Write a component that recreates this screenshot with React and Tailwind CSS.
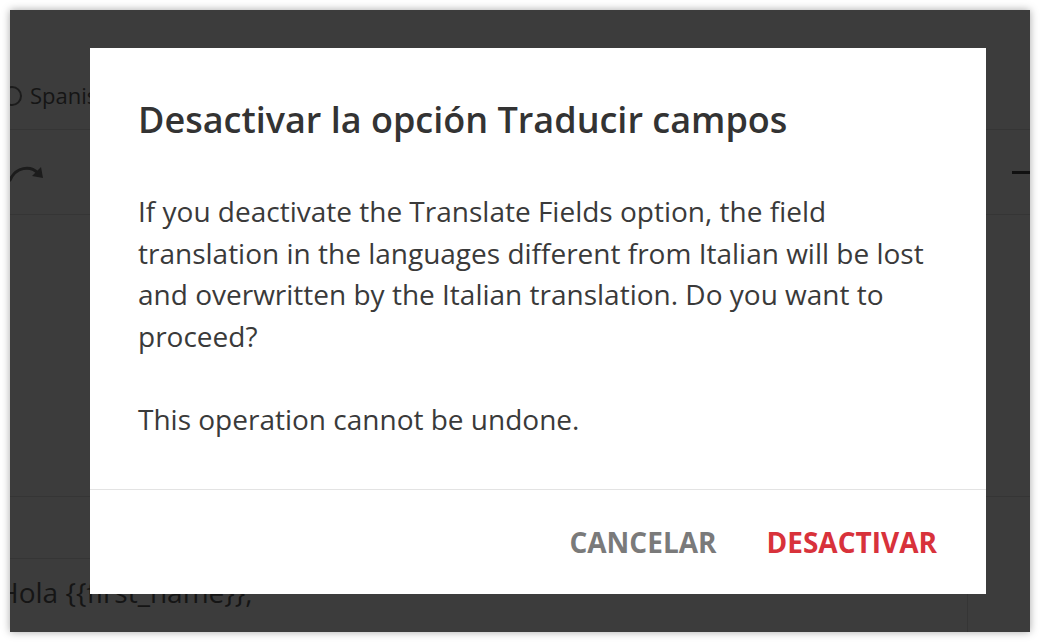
import React from 'react';

const font = { fontFamily: '"Open Sans", "Noto Sans", sans-serif' };

const RedoArc = () => (
  <svg width="38" height="22" viewBox="0 0 38 22" className="-ml-[2px]">
    <path d="M2 19 C 8 6, 22 4, 30 12" fill="none" stroke="#1c1c1c" strokeWidth="3" strokeLinecap="round" />
    <path d="M24 15 L 35 17 L 33 6 Z" fill="#1c1c1c" />
  </svg>
);

const PageBehind = () => (
  <div className="flex flex-col h-full text-[#151515]">
    <div className="h-[120px] border-b border-[#353535] flex items-end pb-[17px]">
      <div className="flex items-center gap-[8px] -ml-[8px]">
        <span className="w-[20px] h-[20px] rounded-full border-[2px] border-[#1c1c1c]" />
        <span className="text-[22px]">Spanish</span>
      </div>
    </div>
    <div className="h-[85px] border-b border-[#353535] flex items-center justify-between">
      <RedoArc />
      <span className="w-[18px] h-[3px] bg-[#111]" />
    </div>
    <div className="h-[282px] border-b border-[#353535]" />
    <div className="flex flex-1">
      <div className="flex-1 flex flex-col">
        <div className="h-[62px] border-b border-[#353535]" />
        <div className="pt-[14px] -ml-[12px] text-[28px] leading-[38px]">Hola {'{{first_name}}'},</div>
      </div>
      <div className="w-[63px] border-l border-[#353535]" />
    </div>
  </div>
);

const ConfirmModal = () => (
  <div className="absolute left-[80px] top-[38px] w-[896px] h-[546px] bg-white flex flex-col">
    <div className="px-[48px] pt-[50px] flex-1">
      <h2 className="text-[36px] leading-[44px] font-semibold text-[#333]">Desactivar la opción Traducir campos</h2>
      <p className="mt-[49px] text-[28px] leading-[41.5px] text-[#3a3a3a]">
        If you deactivate the Translate Fields option, the field translation in the languages different from Italian will be lost and overwritten by the Italian translation. Do you want to proceed?
      </p>
      <p className="mt-[41.5px] text-[28px] leading-[41.5px] text-[#3a3a3a]">This operation cannot be undone.</p>
    </div>
    <div className="h-[105px] border-t border-[#e3e3e3] flex items-center justify-end gap-[50px] pr-[49px]">
      <button type="button" className="text-[28px] font-bold text-[#7a7a7a]">CANCELAR</button>
      <button type="button" className="text-[28px] font-bold text-[#d8323b]">DESACTIVAR</button>
    </div>
  </div>
);

export default function App() {
  return (
    <div className="w-[1040px] h-[642px] bg-white p-[10px]" style={font}>
      <div className="relative w-[1020px] h-[622px] bg-[#3c3c3c] overflow-hidden shadow-[0_0_8px_rgba(0,0,0,0.35)]">
        <PageBehind />
        <ConfirmModal />
      </div>
    </div>
  );
}
